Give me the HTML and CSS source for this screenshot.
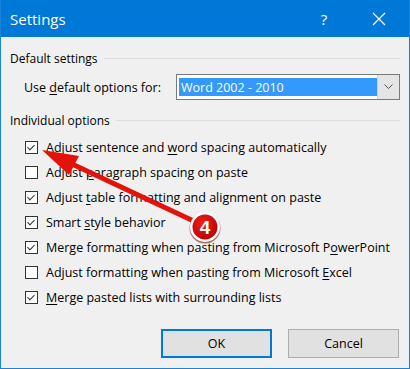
FILE: index.html
```html
<!DOCTYPE html>
<html lang="en">
<head>
<meta charset="UTF-8">
<title>Settings</title>
<link rel="stylesheet" href="styles.css">
</head>
<body>
<div class="dialog">
  <div class="titlebar">
    <span class="title">Settings</span>
    <span class="help">?</span>
    <span class="close">
      <svg width="14" height="14" viewBox="0 0 14 14"><path d="M1 1L13 13M13 1L1 13" stroke="#fff" stroke-width="1.2" fill="none"/></svg>
    </span>
  </div>

  <div class="content">
    <div class="group-head"><span>Default settings</span><div class="rule"></div></div>
    <div class="default-row">
      <span class="label">Use <u>d</u>efault options for:</span>
      <div class="combo">
        <div class="combo-value">Word 2002 - 2010</div>
        <div class="combo-btn">
          <svg width="9" height="6" viewBox="0 0 9 6"><path d="M0.5 0.5L4.5 4.5L8.5 0.5" stroke="#555" stroke-width="1" fill="none"/></svg>
        </div>
      </div>
    </div>

    <div class="group-head second"><span>Individual options</span><div class="rule"></div></div>
    <div class="options">
      <label class="opt"><span class="box checked"></span><span>Adjust sentence and <u>w</u>ord spacing automatically</span></label>
      <label class="opt"><span class="box"></span><span>Adjust <u>p</u>aragraph spacing on paste</span></label>
      <label class="opt"><span class="box checked"></span><span>Adjust <u>t</u>able formatting and alignment on paste</span></label>
      <label class="opt"><span class="box checked"></span><span>Smart <u>s</u>tyle behavior</span></label>
      <label class="opt"><span class="box checked"></span><span>Merge formatting when pasting from Microsoft P<u>o</u>werPoint</span></label>
      <label class="opt"><span class="box"></span><span>Adjust formatting when pasting from Microsoft <u>E</u>xcel</span></label>
      <label class="opt"><span class="box checked"></span><span><u>M</u>erge pasted lists with surrounding lists</span></label>
    </div>

    <div class="buttons">
      <button class="btn default">OK</button>
      <button class="btn">Cancel</button>
    </div>
  </div>

  <!-- callout drawn over the dialog -->
  <svg class="callout" width="410" height="369" viewBox="0 0 410 369">
    <defs>
      <radialGradient id="badge" cx="0.4" cy="0.35" r="0.7">
        <stop offset="0" stop-color="#f0201a"/>
        <stop offset="1" stop-color="#b80000"/>
      </radialGradient>
    </defs>
    <line x1="72" y1="164" x2="200" y2="224" stroke="#e3120b" stroke-width="5" stroke-linecap="round"/>
    <polygon points="42,150 79,156 69,175" fill="#e3120b"/>
    <circle cx="205" cy="228" r="15.5" fill="#7a1a14" opacity="0.6"/>
    <circle cx="205" cy="227" r="15" fill="#fff"/>
    <circle cx="205" cy="227" r="12.5" fill="url(#badge)"/>
    <text x="205" y="234" text-anchor="middle" class="badge-num">4</text>
  </svg>
</div>
</body>
</html>
```

FILE: styles.css
```css
body {margin: 0; background: #f0f0f0; font-family: "Open Sans", "Noto Sans", sans-serif; font-size: 12.5px; color: #000;}

.dialog {
  position: relative;
  width: 410px;
  height: 369px;
  box-sizing: border-box;
  border: 1px solid #1883d7;
  border-top: none;
  background: #f0f0f0;
  overflow: hidden;
}

.titlebar {
  height: 37px;
  background: #0078d7;
  color: #fff;
  display: flex;
  align-items: center;
  margin: 0 -1px;
}
.title {font-size: 15px; margin-left: 10px; flex: 1;}
.help {font-size: 15px; width: 20px; text-align: center; margin-right: 38px;}
.close {width: 14px; height: 14px; margin-right: 24px; display: flex;}

.content {padding: 11px 9px 0 9px;}

.group-head {display: flex; align-items: center; height: 20px; color: #000; font-size: 12px;}
.group-head .rule {flex: 1; height: 1px; background: #dcdcdc; margin-left: 6px;}
.group-head.second {margin-top: 10px;}

.default-row {display: flex; align-items: center; margin-top: 6px; height: 26px;}
.default-row .label {margin-left: 14px; width: 152px;}
u {text-decoration: underline; text-underline-offset: 2px;}

.combo {
  display: flex;
  width: 224px;
  height: 26px;
  box-sizing: border-box;
  border: 1px solid #7a7a7a;
  background: #fff;
  padding: 3px 0 3px 2px;
}
.combo-value {flex: 1; background: #3399ff; color: #fff; font-size: 12.5px; padding-left: 2px; display: flex; align-items: center;}
.combo-btn {width: 21px; margin: -3px 0 -3px 0; background: #e5e5e5; border-left: 1px solid #d0d0d0; display: flex; align-items: center; justify-content: center;}

.options {margin-top: 5px;}
.opt {display: flex; align-items: center; height: 25px; padding-left: 15px; white-space: nowrap;}
.box {
  width: 13px;
  height: 13px;
  box-sizing: border-box;
  border: 1px solid #333;
  background: #fff;
  margin-right: 8px;
  position: relative;
  flex: none;
}
.box.checked::after {
  content: "";
  position: absolute;
  left: 3px;
  top: 1px;
  width: 3px;
  height: 6px;
  border: solid #333;
  border-width: 0 1px 1px 0;
  transform: rotate(45deg);
}

.buttons {display: flex; justify-content: flex-end; gap: 16px; margin-top: 19px; padding-right: 1px;}
.btn {
  width: 111px;
  height: 29px;
  background: #e1e1e1;
  border: 1px solid #adadad;
  font-family: inherit;
  font-size: 12.5px;
  color: #000;
  padding: 0;
}
.btn.default {border: 2px solid #0078d7;}

.callout {position: absolute; left: -1px; top: 0; pointer-events: none;}
.badge-num {font-family: "Liberation Sans", Arial, sans-serif; font-weight: bold; font-size: 19px; fill: #fff;}
```
